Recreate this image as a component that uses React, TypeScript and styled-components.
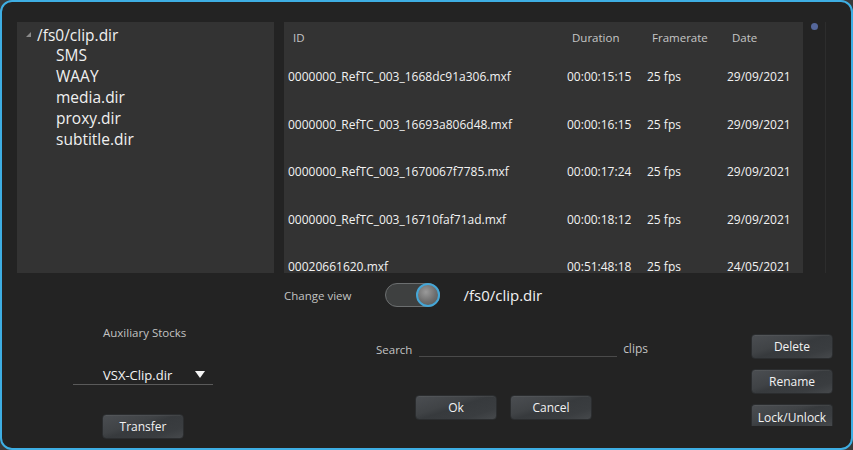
import React from "react";
import styled, { createGlobalStyle } from "styled-components";

const GlobalStyle = createGlobalStyle`
  html, body {
    margin: 0;
    padding: 0;
    background: #3a3a3a;
  }
  * {
    box-sizing: border-box;
  }
`;

const Window = styled.div`
  width: 853px;
  height: 450px;
  border: 2px solid #3eaee3;
  border-radius: 12px;
  background: #232323;
  overflow: hidden;
  font-family: "Open Sans", "Noto Sans", sans-serif;
  color: #e8e8e8;
  display: flex;
  flex-direction: column;
`;

const TopRow = styled.div`
  display: flex;
  padding: 20px 0 0 15px;
  height: 271px;
`;

const TreePanel = styled.div`
  width: 257px;
  height: 251px;
  background: #333333;
  padding: 2px 0 0 8px;
`;

const TreeRoot = styled.div`
  display: flex;
  align-items: center;
  height: 21px;
  font-size: 15.5px;
  color: #f0f0f0;
`;

const Expander = styled.svg`
  width: 5px;
  height: 5px;
  margin: 0 6px 0 1px;
  fill: #8a8a8a;
`;

const TreeItem = styled.div`
  height: 21px;
  line-height: 21px;
  font-size: 15.5px;
  color: #f0f0f0;
  padding-left: 31px;
`;

const TablePanel = styled.div`
  width: 519px;
  height: 251px;
  margin-left: 10px;
  background: #333333;
  overflow: hidden;
`;

const Row = styled.div<{ $header?: boolean }>`
  display: grid;
  grid-template-columns: 279px 80px 80px 1fr;
  align-items: center;
  height: ${(p) => (p.$header ? "31px" : "47.5px")};
  padding-left: 4px;
  font-size: ${(p) => (p.$header ? "11.5px" : "12px")};
  color: ${(p) => (p.$header ? "#c6c6c6" : "#f2f2f2")};
  white-space: nowrap;
`;

const HeadCell = styled.div`
  padding-left: 5px;
`;

const Cell = styled.div``;

const ScrollArea = styled.div`
  width: 23px;
  height: 251px;
  position: relative;
  border-right: 1px solid #2d2d2d;
`;

const ScrollThumb = styled.div`
  position: absolute;
  top: 1px;
  left: 8px;
  width: 7px;
  height: 7px;
  border-radius: 50%;
  background: #55679a;
`;

const ViewRow = styled.div`
  display: flex;
  align-items: center;
  height: 24px;
  margin-top: 10px;
  padding-left: 282px;
`;

const SmallLabel = styled.span`
  font-size: 11.5px;
  color: #c2c2c2;
`;

const Toggle = styled.div`
  width: 55px;
  height: 24px;
  margin: 0 23px 0 34px;
  border-radius: 12px;
  border: 1px solid #6c6f70;
  background: #3e4040;
  display: flex;
  justify-content: flex-end;
  align-items: center;
`;

const Knob = styled.div`
  width: 24px;
  height: 24px;
  margin-right: -1px;
  border-radius: 50%;
  border: 2px solid #45a6d6;
  background: radial-gradient(circle at 40% 35%, #9a9a9a 0%, #6e6e6e 55%, #555 100%);
`;

const PathText = styled.span`
  font-size: 15px;
  color: #f2f2f2;
`;

const Bottom = styled.div`
  display: flex;
  flex: 1;
`;

const LeftCol = styled.div`
  width: 140px;
  margin-left: 71px;
  display: flex;
  flex-direction: column;
  padding-top: 18px;
`;

const AuxLabel = styled(SmallLabel)`
  padding-left: 30px;
  height: 16px;
  line-height: 16px;
`;

const Select = styled.div`
  display: flex;
  align-items: center;
  justify-content: space-between;
  margin-top: 24px;
  height: 20px;
  padding: 0 8px 0 30px;
  border-bottom: 1px solid #5a5a5a;
  font-size: 13px;
  color: #f4f4f4;
`;

const Caret = styled.svg`
  width: 10px;
  height: 7px;
  fill: #f4f4f4;
`;

const Button = styled.div<{ $clip?: boolean }>`
  width: 82px;
  height: ${(p) => (p.$clip ? "22px" : "25px")};
  display: flex;
  align-items: ${(p) => (p.$clip ? "flex-start" : "center")};
  padding-top: ${(p) => (p.$clip ? "4px" : "0")};
  justify-content: center;
  font-size: 12px;
  color: #f2f2f2;
  border: 1px solid #2b2d2f;
  border-bottom-width: ${(p) => (p.$clip ? "0" : "1px")};
  border-radius: ${(p) => (p.$clip ? "4px 4px 0 0" : "4px")};
  background: linear-gradient(
    162deg,
    #4b4e52 0%,
    #404346 38%,
    #373a3d 50%,
    #3a3d40 78%,
    #46494c 100%
  );
  box-shadow: inset 0 1px 0 rgba(255, 255, 255, 0.05);
`;

const TransferButton = styled(Button)`
  margin: 29px 0 0 29px;
`;

const CenterCol = styled.div`
  margin-left: 163px;
  width: 272px;
  display: flex;
  flex-direction: column;
  padding-top: 32px;
`;

const SearchRow = styled.div`
  display: flex;
  align-items: flex-end;
  height: 18px;
`;

const SearchInput = styled.div`
  width: 200px;
  height: 18px;
  margin: 0 6px 0 7px;
  border-bottom: 1px solid #4a4a4a;
`;

const ClipsLabel = styled(SmallLabel)`
  font-size: 12px;
`;

const DialogButtons = styled.div`
  display: flex;
  gap: 13px;
  margin: 38px 0 0 39px;
`;

const RightCol = styled.div`
  margin-left: 103px;
  display: flex;
  flex-direction: column;
  gap: 10px;
  padding-top: 27px;
`;

const folders = ["SMS", "WAAY", "media.dir", "proxy.dir", "subtitle.dir"];

const clips = [
  ["0000000_RefTC_003_1668dc91a306.mxf", "00:00:15:15", "25 fps", "29/09/2021"],
  ["0000000_RefTC_003_16693a806d48.mxf", "00:00:16:15", "25 fps", "29/09/2021"],
  ["0000000_RefTC_003_1670067f7785.mxf", "00:00:17:24", "25 fps", "29/09/2021"],
  ["0000000_RefTC_003_16710faf71ad.mxf", "00:00:18:12", "25 fps", "29/09/2021"],
  ["00020661620.mxf", "00:51:48:18", "25 fps", "24/05/2021"],
];

export default function App() {
  return (
    <>
      <GlobalStyle />
      <Window>
        <TopRow>
          <TreePanel>
            <TreeRoot>
              <Expander viewBox="0 0 5 5">
                <polygon points="5,0 5,5 0,5" />
              </Expander>
              /fs0/clip.dir
            </TreeRoot>
            {folders.map((f) => (
              <TreeItem key={f}>{f}</TreeItem>
            ))}
          </TreePanel>
          <TablePanel>
            <Row $header>
              <HeadCell>ID</HeadCell>
              <HeadCell>Duration</HeadCell>
              <HeadCell>Framerate</HeadCell>
              <HeadCell>Date</HeadCell>
            </Row>
            {clips.map((c) => (
              <Row key={c[0]}>
                {c.map((v, i) => (
                  <Cell key={i}>{v}</Cell>
                ))}
              </Row>
            ))}
          </TablePanel>
          <ScrollArea>
            <ScrollThumb />
          </ScrollArea>
        </TopRow>
        <ViewRow>
          <SmallLabel>Change view</SmallLabel>
          <Toggle>
            <Knob />
          </Toggle>
          <PathText>/fs0/clip.dir</PathText>
        </ViewRow>
        <Bottom>
          <LeftCol>
            <AuxLabel>Auxiliary Stocks</AuxLabel>
            <Select>
              VSX-Clip.dir
              <Caret viewBox="0 0 10 7">
                <polygon points="0,0 10,0 5,7" />
              </Caret>
            </Select>
            <TransferButton>Transfer</TransferButton>
          </LeftCol>
          <CenterCol>
            <SearchRow>
              <SmallLabel>Search</SmallLabel>
              <SearchInput />
              <ClipsLabel>clips</ClipsLabel>
            </SearchRow>
            <DialogButtons>
              <Button>Ok</Button>
              <Button>Cancel</Button>
            </DialogButtons>
          </CenterCol>
          <RightCol>
            <Button>Delete</Button>
            <Button>Rename</Button>
            <Button $clip>Lock/Unlock</Button>
          </RightCol>
        </Bottom>
      </Window>
    </>
  );
}
